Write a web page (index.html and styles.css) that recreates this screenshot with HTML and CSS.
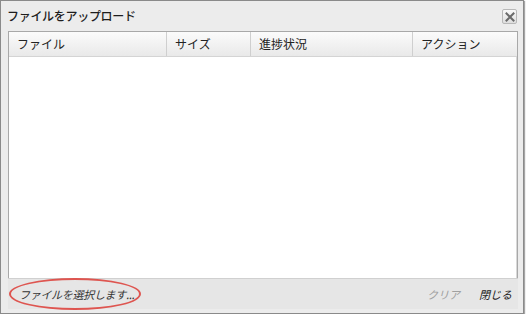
FILE: index.html
```html
<!DOCTYPE html>
<html lang="ja">
<head>
    <meta charset="UTF-8">
    <title>ファイルをアップロード</title>
    <link rel="stylesheet" href="styles.css">
</head>
<body>
    <div class="upload-window">
        <div class="title-bar">
            <span class="title">ファイルをアップロード</span>
            <button class="close-btn" aria-label="閉じる">
                <svg width="10" height="10" viewBox="0 0 10 10">
                    <path d="M1.5 1.5 L8.5 8.5 M8.5 1.5 L1.5 8.5" stroke="#6a6a6a" stroke-width="2" stroke-linecap="square"/>
                </svg>
            </button>
        </div>

        <div class="file-grid">
            <div class="grid-header">
                <div class="col col-name">ファイル</div>
                <div class="col col-size">サイズ</div>
                <div class="col col-progress">進捗状況</div>
                <div class="col col-action">アクション</div>
            </div>
            <div class="grid-body"></div>
            <div class="grid-footer">
                <a href="#" class="select-link">ファイルを選択します...</a>
                <div class="footer-actions">
                    <a href="#" class="action disabled">クリア</a>
                    <a href="#" class="action">閉じる</a>
                </div>
            </div>
        </div>
    </div>
</body>
</html>
```

FILE: styles.css
```css
* {
    box-sizing: border-box;
    margin: 0;
    padding: 0;
}

body {
    background: #ffffff;
    font-family: "Noto Sans CJK JP", "DejaVu Sans", sans-serif;
    font-size: 12px;
    color: #222;
}

.upload-window {
    width: 524px;
    height: 314px;
    background: #ececec;
    border: 1px solid #8a8a8a;
    box-shadow: 1px 1px 1px rgba(0, 0, 0, 0.35);
    display: flex;
    flex-direction: column;
}

.title-bar {
    height: 30px;
    display: flex;
    align-items: center;
    justify-content: space-between;
    padding: 0 6px 0 6px;
}

.title {
    font-size: 12px;
    font-weight: 500;
    color: #1e1e1e;
    letter-spacing: -0.3px;
    margin-top: -2px;
}

.close-btn {
    width: 15px;
    height: 15px;
    border: 1px solid #b8b8b8;
    border-radius: 2px;
    background: linear-gradient(#f8f8f8, #dedede);
    display: flex;
    align-items: center;
    justify-content: center;
    margin-top: 1px;
}

.file-grid {
    margin: 0 5px 0 7px;
    height: 278px;
    border: 1px solid #a8a8a8;
    border-bottom: none;
    display: flex;
    flex-direction: column;
}

.grid-header {
    height: 25px;
    display: flex;
    background: linear-gradient(#fbfbfb, #e9e9e9);
    border-bottom: 1px solid #d4d4d4;
}

.col {
    flex-shrink: 0;
    border-right: 1px solid #cfcfcf;
    padding: 0 8px;
    line-height: 24px;
    font-size: 12px;
    color: #222;
}

.col-name { width: 158px; }
.col-size { width: 84px; }
.col-progress { width: 162px; }
.col-action { flex: 1; border-right: none; }

.grid-body {
    flex: 1;
    background: #ffffff;
    border-right: 1px solid #d8d8d8;
}

.grid-footer {
    height: 31px;
    background: #e6e6e6;
    border-top: 1px solid #d0d0d0;
    display: flex;
    align-items: center;
    justify-content: space-between;
    margin: 0 -1px;
    padding: 0 6px 0 0;
}

.select-link {
    display: inline-block;
    color: #333;
    font-size: 11px;
    font-style: italic;
    text-decoration: none;
    border: 2px solid #de5550;
    border-radius: 50%;
    padding: 6px 5px 6px 8px;
    margin-left: 1px;
    letter-spacing: -0.3px;
}

.footer-actions {
    display: flex;
    gap: 19px;
}

.action {
    font-style: italic;
    color: #222;
    text-decoration: none;
    font-size: 11px;
}

.action.disabled {
    color: #a0a0a0;
}
```
